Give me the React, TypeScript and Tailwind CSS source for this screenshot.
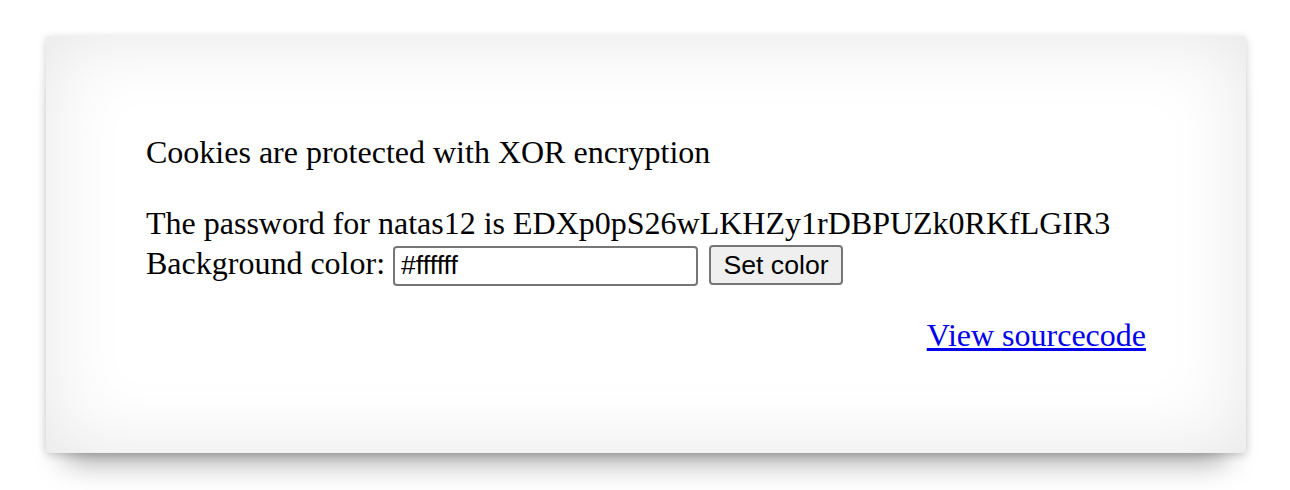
export default function App() {
  return (
    <div className="min-h-[490px] bg-white pt-[36px] pl-[46px]">
      <div
        className="w-[1200px] rounded-[4px] bg-white px-[100px] pt-[99px] pb-[100px] text-[32px] leading-[35.4px] text-black shadow-[0_28px_28px_-20px_rgba(0,0,0,0.38),0_2px_8px_rgba(0,0,0,0.2),inset_0_0_80px_rgba(0,0,0,0.1)]"
        style={{ fontFamily: '"Liberation Serif", "Times New Roman", serif' }}
      >
        <div>Cookies are protected with XOR encryption</div>
        <div className="h-[35.4px]" />
        <div>The password for natas12 is EDXp0pS26wLKHZy1rDBPUZk0RKfLGIR3</div>
        <form className="mt-[4px] mb-[32px] flex items-baseline" onSubmit={(e) => e.preventDefault()}>
          <span>Background color:</span>
          <input
            name="bgcolor"
            defaultValue="#ffffff"
            className="ml-[8px] h-[40px] w-[305px] rounded-[4px] border-2 border-[#767676] bg-white px-[6px] text-[26.67px] leading-[30px] text-black outline-none"
            style={{ fontFamily: '"Liberation Sans", Arial, sans-serif' }}
          />
          <button
            type="submit"
            className="ml-[11px] h-[40px] w-[134px] rounded-[4px] border-2 border-[#767676] bg-[#efefef] text-[26.67px] leading-[30px] text-black"
            style={{ fontFamily: '"Liberation Sans", Arial, sans-serif' }}
          >
            Set color
          </button>
        </form>
        <div className="text-right">
          <a href="#" className="text-[#0000ee] underline">
            View sourcecode
          </a>
        </div>
      </div>
    </div>
  );
}
